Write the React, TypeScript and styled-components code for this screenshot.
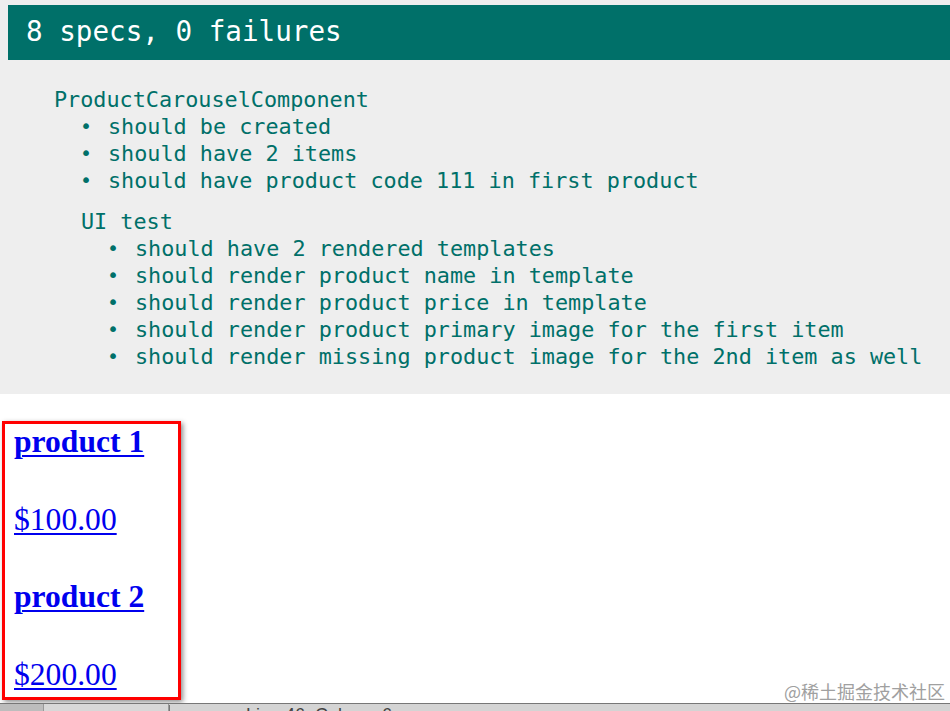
import React from "react";
import styled, { createGlobalStyle } from "styled-components";

const Global = createGlobalStyle`
  html, body { margin: 0; padding: 0; background: #fff; }
  body { font-family: "Liberation Serif", serif; }
`;

const Page = styled.div`
  position: relative;
  width: 950px;
  height: 711px;
  overflow: hidden;
  display: flex;
  flex-direction: column;
`;

const Reporter = styled.section`
  background: #eeeeee;
  height: 394px;
  padding: 5px 0 0 8px;
  box-sizing: border-box;
  font-family: "DejaVu Sans Mono", "Liberation Mono", monospace;
  color: #007069;
`;

const Banner = styled.div`
  background: #007069;
  color: #ffffff;
  height: 55px;
  box-sizing: border-box;
  padding: 0 0 3px 18px;
  display: flex;
  align-items: center;
  font-size: 27.6px;
`;

const Suite = styled.div<{ $indent: number; $top: number }>`
  margin-left: ${(p) => p.$indent}px;
  margin-top: ${(p) => p.$top}px;
  font-size: 21.8px;
  line-height: 27px;
`;

const SuiteTitle = styled.div`
  white-space: pre;
`;

const SpecList = styled.ul`
  list-style: none;
  margin: 0;
  padding: 0 0 0 54px;
`;

const Spec = styled.li`
  display: flex;
  white-space: pre;
  &::before {
    content: "•";
    width: 28px;
    margin-left: -28px;
    flex: none;
    font-size: 20px;
  }
`;

const Products = styled.main`
  flex: 1;
  background: #fff;
  padding: 27px 0 0 2px;
`;

const Carousel = styled.div`
  width: 164px;
  height: 273px;
  border: 3px solid #ff0000;
  box-shadow: 2px 2px 5px rgba(0, 0, 0, 0.45);
  display: flex;
  flex-direction: column;
  gap: 41.5px;
  padding: 0 0 0 9px;
  box-sizing: content-box;
`;

const ItemLink = styled.a<{ $bold?: boolean }>`
  display: block;
  font-family: "Liberation Serif", serif;
  font-size: 31.6px;
  line-height: 36px;
  font-weight: ${(p) => (p.$bold ? 700 : 400)};
  color: #0000ee;
  text-decoration: underline;
  text-decoration-thickness: 2px;
  text-underline-offset: 3px;
  white-space: nowrap;
`;

const StatusBar = styled.footer`
  height: 7px;
  overflow: hidden;
  background: #d4d4d4;
  border-top: 1px solid #777;
  display: flex;
  align-items: flex-start;
  font-family: "Liberation Sans", sans-serif;
  font-size: 18px;
  color: #444;
`;

const StatusCell = styled.div<{ $w: number; $bg: string }>`
  width: ${(p) => p.$w}px;
  height: 24px;
  background: ${(p) => p.$bg};
  border-right: 1px solid #999;
  flex: none;
`;

const StatusText = styled.div`
  padding-left: 76px;
  margin-top: 1px;
  line-height: 20px;
  border-left: 1px solid #777;
`;

const Watermark = styled.div`
  position: absolute;
  right: 5px;
  bottom: 7px;
  font-family: "Noto Sans CJK SC", "Liberation Sans", sans-serif;
  font-size: 18px;
  color: #a0a0a0;
`;

const rootSpecs = [
  "should be created",
  "should have 2 items",
  "should have product code 111 in first product",
];

const uiSpecs = [
  "should have 2 rendered templates",
  "should render product name in template",
  "should render product price in template",
  "should render product primary image for the first item",
  "should render missing product image for the 2nd item as well",
];

const products = [
  { name: "product 1", price: "$100.00" },
  { name: "product 2", price: "$200.00" },
];

export default function App() {
  return (
    <>
      <Global />
      <Page>
        <Reporter>
          <Banner>8 specs, 0 failures</Banner>
          <Suite $indent={46} $top={26}>
            <SuiteTitle>ProductCarouselComponent</SuiteTitle>
            <SpecList>
              {rootSpecs.map((s) => (
                <Spec key={s}>{s}</Spec>
              ))}
            </SpecList>
            <Suite $indent={27} $top={14}>
              <SuiteTitle>UI test</SuiteTitle>
              <SpecList>
                {uiSpecs.map((s) => (
                  <Spec key={s}>{s}</Spec>
                ))}
              </SpecList>
            </Suite>
          </Suite>
        </Reporter>
        <Products>
          <Carousel>
            {products.map((p) => (
              <React.Fragment key={p.name}>
                <ItemLink href="#" $bold>
                  {p.name}
                </ItemLink>
                <ItemLink href="#">{p.price}</ItemLink>
              </React.Fragment>
            ))}
          </Carousel>
        </Products>
        <StatusBar>
          <StatusCell $w={43} $bg="#bdbdbd" />
          <StatusCell $w={124} $bg="#d8d8d8" />
          <StatusText>Line 46, Column 6</StatusText>
        </StatusBar>
        <Watermark>@稀土掘金技术社区</Watermark>
      </Page>
    </>
  );
}
